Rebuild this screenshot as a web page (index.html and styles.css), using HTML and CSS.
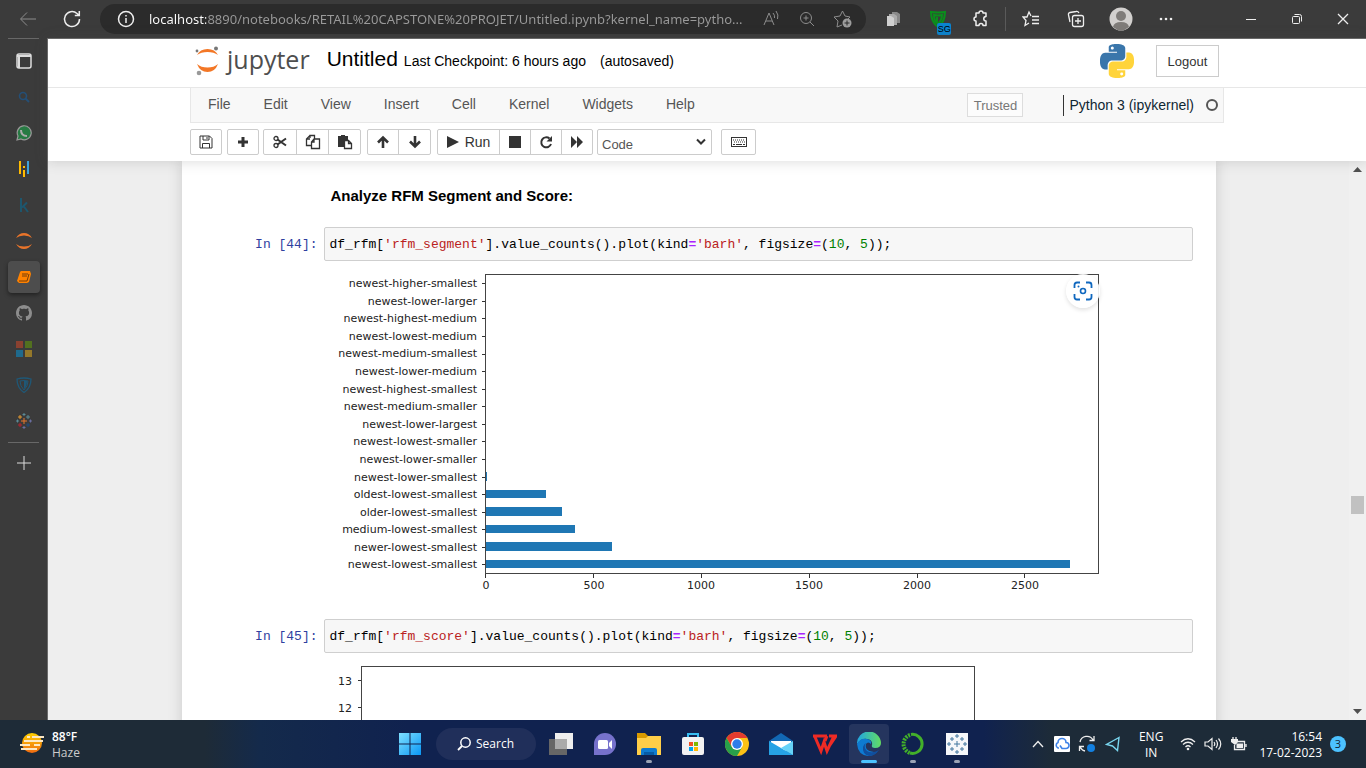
FILE: index.html
```html
<!DOCTYPE html>
<html lang="en">
<head>
<meta charset="utf-8">
<title>Untitled - Jupyter Notebook</title>
<link rel="stylesheet" href="styles.css">
</head>
<body>
<div class="browser-bar">
  <button class="nav-btn dim" aria-label="Back"><svg width="20" height="20" viewBox="0 0 20 20"><path d="M18 10H3M9 3.500L2.500 10L9 16.500"/></svg></button>
  <button class="nav-btn" aria-label="Refresh"><svg width="20" height="20" viewBox="0 0 20 20"><path d="M17.500 10A7.500 7.500 0 1 1 15 4.500L17.300 6.500M17.300 2V6.500H12.800" stroke-width="1.500"/></svg></button>
  <div class="address">
    <button class="bar-btn" aria-label="Site information"><svg width="18" height="18" viewBox="0 0 18 18"><circle cx="9" cy="9" r="7.500" stroke-width="1.500"/><path d="M9 8V13M9 5V6.500" stroke-width="1.500"/></svg></button>
    <input class="url" type="text" aria-label="Address" value="localhost:8890/notebooks/RETAIL%20CAPSTONE%20PROJET/Untitled.ipynb?kernel_name=pytho...">
    <button class="bar-btn dim" aria-label="Read aloud"><svg width="18" height="18" viewBox="0 0 18 18"><path d="M2 15L7 3L12 15M4 11H10M11 3Q13 5 12.500 8M14 1Q17 5 15.500 9"/></svg></button>
    <button class="bar-btn dim" aria-label="Zoom"><svg width="18" height="18" viewBox="0 0 18 18"><circle cx="8" cy="8" r="5.500"/><path d="M12 12L16 16M8 5.500V10.500M5.500 8H10.500"/></svg></button>
    <button class="bar-btn dim" aria-label="Add to favorites"><svg width="20" height="20" viewBox="0 0 20 20"><path d="M9 16L4 18L5 12L1 8L7 7L9.500 2L12 7L17 8L15 10"/><circle cx="14" cy="14" r="4.500" fill="#9d9d9d" stroke="none"/><path d="M14 11.500V16.500M11.500 14H16.500" stroke="#2b2b2b"/></svg></button>
  </div>
  <div class="extensions">
    <button class="bar-btn" aria-label="Copy extension"><svg width="18" height="18" viewBox="0 0 18 18" stroke="none"><path d="M7 2H12L15 4V13H7Z" fill="#888"/><path d="M4 4H9L12 6V15H4Z" fill="#aaa"/><path d="M2 6H6L9 8V16H2Z" fill="#d0d0d0"/></svg></button>
    <button class="bar-btn shield" aria-label="VPN extension"><svg width="18" height="18" viewBox="0 0 18 18"><path d="M2 2Q9 3 16 2Q16 12 9 17Q2 12 2 2ZM5 5Q9 6 13 5Q13 10 9 14Q5 11 5 5ZM8 7V12" stroke="#0a8f1c" stroke-width="2"/></svg><span class="badge">SG</span></button>
    <button class="bar-btn" aria-label="Extensions"><svg width="18" height="18" viewBox="0 0 18 18"><path d="M4 3H7A2 2 0 0 1 11 3H14V6.500A2 2 0 0 0 14 11V15.500H11A2 2 0 0 0 7 15.500H4V11A2 2 0 0 1 4 7Z" stroke-width="1.500" stroke-linejoin="round"/></svg></button>
  </div>
  <div class="tools">
    <button class="bar-btn" aria-label="Favorites"><svg width="18" height="18" viewBox="0 0 18 18"><path d="M9 6L7 2L5 7L1 7L4 10.500L3 15.500L7 13M10 6.500H17M10 10H17M10 13.500H17" stroke-width="1.300"/></svg></button>
    <button class="bar-btn" aria-label="Collections"><svg width="18" height="18" viewBox="0 0 18 18"><path d="M3 12L1.500 5Q1 3 3 2.500L9 1.500Q11 1 12 3" stroke-width="1.300"/><rect x="5.500" y="5.500" width="11" height="11" rx="2" stroke-width="1.300"/><path d="M11 8V14M8 11H14" stroke-width="1.300"/></svg></button>
    <button class="bar-btn" aria-label="Profile"><svg width="24" height="24" viewBox="0 0 24 24" stroke="none"><circle cx="12" cy="12" r="11.500" fill="#d2d0ce"/><circle cx="12" cy="9" r="5" fill="#7f7c79"/><path d="M4 20Q5 15 12 15Q19 15 20 20Q12 27 4 20Z" fill="#7f7c79"/></svg></button>
    <button class="bar-btn" aria-label="Menu"><svg width="16" height="16" viewBox="0 0 16 16" stroke="none" fill="#eee"><circle cx="3" cy="8" r="1.300"/><circle cx="8" cy="8" r="1.300"/><circle cx="13" cy="8" r="1.300"/></svg></button>
  </div>
  <div class="window-controls">
    <button class="bar-btn" aria-label="Minimize"><svg width="12" height="12" viewBox="0 0 12 12"><path d="M1 6.500H11"/></svg></button>
    <button class="bar-btn" aria-label="Restore"><svg width="12" height="12" viewBox="0 0 12 12"><rect x="1.500" y="3.500" width="7" height="7" rx="1"/><path d="M3.500 1.500H8.500Q10.500 1.500 10.500 3.500V8.500"/></svg></button>
    <button class="bar-btn" aria-label="Close"><svg width="12" height="12" viewBox="0 0 12 12"><path d="M1 1L11 11M11 1L1 11" stroke-width="1.300"/></svg></button>
  </div>
</div>

<div class="workspace">
  <nav class="side" aria-label="Vertical tabs">
    <button class="side-btn" aria-label="Tab actions"><svg width="16" height="16" viewBox="0 0 16 16"><rect x="1" y="1" width="14" height="14" rx="2" stroke="#ddd" stroke-width="1.500"/><path d="M1 3H15M3 3V15" stroke="#ddd" stroke-width="2"/></svg></button>
    <button class="side-btn" aria-label="Search tab"><svg width="12" height="12" viewBox="0 0 12 12"><circle cx="5" cy="5" r="3.500" stroke="#244f77" stroke-width="1.600"/><path d="M7.500 7.500L11 11" stroke="#244f77" stroke-width="1.800"/></svg></button>
    <button class="side-btn" aria-label="WhatsApp"><svg width="16" height="16" viewBox="0 0 16 16"><path d="M1 15L2 11A7 7 0 1 1 5 14Z" fill="#277a43" stroke="#999" stroke-width="1.200"/><path d="M5 5Q5 11 11 11" stroke="#aaa" stroke-width="2"/></svg></button>
    <button class="side-btn" aria-label="Pandas"><svg width="16" height="16" viewBox="0 0 16 16" stroke="none"><path d="M3 0H5V13H3ZM7 5H9V7H7ZM7 9H9V16H7Z" fill="#fb0"/><path d="M11 0H13V13H11Z" fill="#3ba2dc"/></svg></button>
    <button class="side-btn" aria-label="Kaggle"><svg width="16" height="16" viewBox="0 0 16 16"><path d="M5 1V15M11 5.500L6 10.500M7.500 9L12 15" stroke="#1d566d" stroke-width="2"/></svg></button>
    <button class="side-btn" aria-label="Jupyter home"><svg width="16" height="16" viewBox="0 0 16 16" stroke="none" fill="#e8742a"><path d="M0 5Q3 0 8 0T16 5Q13 2.500 8 2.500T0 5ZM0 11Q3 16 8 16T16 11Q13 13.500 8 13.500T0 11Z"/></svg></button>
    <button class="side-btn active" aria-label="Untitled notebook"><svg width="14" height="14" viewBox="0 0 14 14" stroke="none"><path d="M4 1H13L14 4L12 12L10 13H2L0 11L3 2Z" fill="#ff8200"/><path d="M5 4H11M5 6H10M2 11H10L12 4" fill="none" stroke="#733d0a"/></svg></button>
    <button class="side-btn" aria-label="GitHub"><svg width="16" height="16" viewBox="0 0 16 16" stroke="none" fill="#8d8d8d"><path d="M8 0C3.580 0 0 3.580 0 8c0 3.540 2.290 6.530 5.470 7.590.4.070.55-.17.55-.38 0-.19-.01-.82-.01-1.490-2.010.37-2.530-.49-2.690-.94-.09-.23-.48-.94-.82-1.130-.28-.15-.68-.52-.01-.53.63-.01 1.080.58 1.230.82.72 1.210 1.870.87 2.330.66.07-.52.28-.87.51-1.070-1.780-.2-3.640-.89-3.640-3.950 0-.87.31-1.590.82-2.150-.08-.2-.36-1.020.08-2.120 0 0 .67-.21 2.200.82.64-.18 1.320-.27 2-.27s1.360.09 2 .27c1.530-1.040 2.200-.82 2.200-.82.44 1.100.16 1.920.08 2.120.51.56.82 1.270.82 2.150 0 3.070-1.870 3.750-3.650 3.950.29.25.54.73.54 1.480 0 1.070-.01 1.930-.01 2.200 0 .21.15.46.55.38A8.010 8.010 0 0 0 16 8c0-4.420-3.580-8-8-8z"/></svg></button>
    <button class="side-btn" aria-label="Microsoft"><svg width="16" height="16" viewBox="0 0 16 16" stroke="none"><path d="M0 0H7V7H0Z" fill="#8a4130"/><path d="M9 0H16V7H9Z" fill="#52701f"/><path d="M0 9H7V16H0Z" fill="#1f6a8d"/><path d="M9 9H16V16H9Z" fill="#94782a"/></svg></button>
    <button class="side-btn" aria-label="VPN"><svg width="16" height="16" viewBox="0 0 16 16"><path d="M1 2Q8 0 15 2Q15 11 8 15.500Q1 11 1 2Z" stroke="#1f5877" stroke-width="1.300"/><path d="M4 4Q8 3 12 4Q12 9 8 13Q4 9 4 4Z" stroke="#1f5877"/><path d="M8 4V12Q11 9 11 4Z" fill="#1f5877" stroke="none"/></svg></button>
    <button class="side-btn" aria-label="Tableau"><svg width="16" height="16" viewBox="0 0 16 16"><path d="M8 5V11M5 8H11" stroke="#e8762c"/><path d="M4 2V6M2 4H6" stroke="#e59a30"/><path d="M12 2V6M10 4H14M8 0V3M6.500 1.500H9.500M1.500 6.500V9.500M0 8H3" stroke="#5b8a95"/><path d="M4 10V14M2 12H6" stroke="#b8232f"/><path d="M12 10V14M10 12H14" stroke="#1f4a7d"/><path d="M14.500 6.500V9.500M13 8H16M8 13V16M6.500 14.500H9.500" stroke="#6a6fa0"/></svg></button>
    <div class="side-rule"></div>
    <button class="side-btn plus" aria-label="Add tab"><svg width="16" height="16" viewBox="0 0 16 16"><path d="M8 1V15M1 8H15" stroke="#ddd"/></svg></button>
  </nav>

  <div class="page">
    <header class="nb-header">
      <div class="title-row">
        <div class="wide title-inner">
          <a class="logo" href="#"><svg width="26" height="30" viewBox="0 0 26 30" stroke="none"><path d="M2 9Q5 3 12.500 3T23 9Q19 6 12.500 6T2 9ZM2 18Q6 21.500 12.500 21.500T23 18Q20 26 12.500 26T2 18Z" fill="#f37726"/><circle cx="21" cy="2.500" r="2" fill="#777"/><circle cx="2" cy="5" r="1.400" fill="#777"/><circle cx="4" cy="27" r="2.300" fill="#999"/></svg><span>jupyter</span></a>
          <h1 class="nb-name">Untitled</h1>
          <span class="checkpoint">Last Checkpoint: 6 hours ago</span>
          <span class="autosave">(autosaved)</span>
          <svg class="python" width="34" height="34" viewBox="0 0 24 24" stroke="none"><path fill="#3a76ab" d="M14.250.18l.9.2.73.26.59.3.45.32.34.34.25.34.16.33.1.3.04.26.02.2-.01.13V8.500l-.05.63-.13.55-.21.46-.26.38-.3.31-.33.25-.35.19-.35.14-.33.1-.3.07-.26.04-.21.02H8.770l-.69.05-.59.14-.5.22-.41.27-.33.32-.27.35-.2.36-.15.37-.1.35-.07.32-.04.27-.02.21v3.060H3.170l-.21-.03-.28-.07-.32-.12-.35-.18-.36-.26-.36-.36-.35-.46-.32-.59-.28-.73-.21-.88-.14-1.050-.05-1.230.06-1.220.16-1.040.24-.87.32-.71.36-.57.4-.44.42-.33.42-.24.4-.16.36-.1.32-.05.24-.01h.16l.06.01h8.160v-.83H6.180l-.01-2.750-.02-.37.05-.34.11-.31.17-.28.25-.26.31-.23.38-.2.44-.18.51-.15.58-.12.64-.1.71-.06.77-.04.84-.02 1.270.05zm-6.300 1.980l-.23.33-.08.41.08.41.23.34.33.22.41.09.41-.09.33-.22.23-.34.08-.41-.08-.41-.23-.33-.33-.22-.41-.09-.41.09z"/><path fill="#ffd43b" d="M21.040 6.110l.28.06.32.12.35.18.36.27.36.35.35.47.32.59.28.73.21.88.14 1.040.05 1.230-.06 1.230-.16 1.040-.24.86-.32.71-.36.57-.4.45-.42.33-.42.24-.4.16-.36.09-.32.05-.24.02-.16-.01h-8.220v.82h5.840l.01 2.760.02.36-.05.34-.11.31-.17.29-.25.25-.31.24-.38.2-.44.17-.51.15-.58.13-.64.09-.71.07-.77.04-.84.01-1.270-.04-1.070-.14-.9-.2-.73-.25-.59-.3-.45-.33-.34-.34-.25-.34-.16-.33-.1-.3-.04-.25-.02-.2.01-.13v-5.340l.05-.64.13-.54.21-.46.26-.38.3-.32.33-.24.35-.2.35-.14.33-.1.3-.06.26-.04.21-.02.13-.01h5.840l.69-.05.59-.14.5-.21.41-.28.33-.32.27-.35.2-.36.15-.36.1-.35.07-.32.04-.28.02-.21V6.070h2.090l.14.01zm-6.470 14.250l-.23.33-.08.41.08.41.23.33.33.23.41.08.41-.08.33-.23.23-.33.08-.41-.08-.41-.23-.33-.33-.23-.41-.08-.41.08z"/></svg>
          <button class="logout">Logout</button>
        </div>
      </div>
      <div class="wide menubar">
        <nav class="menus">
          <a href="#">File</a><a href="#">Edit</a><a href="#">View</a><a href="#">Insert</a><a href="#">Cell</a><a href="#">Kernel</a><a href="#">Widgets</a><a href="#">Help</a>
        </nav>
        <button class="trusted">Trusted</button>
        <div class="kernel"><span>Python 3 (ipykernel)</span><i class="idle"></i></div>
      </div>
      <div class="wide toolbar">
        <div class="group"><button aria-label="Save"><svg width="14" height="14" viewBox="0 0 14 14"><path d="M1 1H10.500L13 3.500V13H1ZM4 1V5H10V1M3.500 13V8.500H10.500V13M8 2V4"/></svg></button></div>
        <div class="group"><button aria-label="Insert cell"><svg width="12" height="12" viewBox="0 0 12 12"><path d="M6 1V11M1 6H11" stroke-width="3"/></svg></button></div>
        <div class="group three">
          <button aria-label="Cut"><svg width="14" height="14" viewBox="0 0 14 14"><circle cx="3" cy="3.500" r="2" stroke-width="1.300"/><circle cx="3" cy="10.500" r="2" stroke-width="1.300"/><path d="M4.500 4.500L13 10.500M4.500 9.500L13 3.500" stroke-width="2"/></svg></button>
          <button aria-label="Copy"><svg width="16" height="16" viewBox="0 0 16 16"><path d="M5 4V1.500H9.500V5M5 1.500L1.500 5V11.500H6M1.500 5H5M9 5H14.500V14.500H6.500V8L9 5V8H6.500" stroke-width="1.300"/></svg></button>
          <button aria-label="Paste"><svg width="16" height="16" viewBox="0 0 16 16"><path d="M1 2H4V1H8V2H11V6H7V13H1Z" fill="#333" stroke="none"/><path d="M7.500 6.500H11.500L14.500 9.500V14.500H7.500ZM11.500 6.500V9.500H14.500" stroke-width="1.300"/></svg></button>
        </div>
        <div class="group">
          <button aria-label="Move up"><svg width="14" height="14" viewBox="0 0 14 14"><path d="M7 13V3M2 7.500L7 2.500L12 7.500" stroke-width="2.600"/></svg></button>
          <button aria-label="Move down"><svg width="14" height="14" viewBox="0 0 14 14"><path d="M7 1V11M2 6.500L7 11.500L12 6.500" stroke-width="2.600"/></svg></button>
        </div>
        <div class="group run">
          <button class="run-btn"><svg width="12" height="12" viewBox="0 0 12 12"><path d="M0 0L12 6L0 12Z" fill="#333" stroke="none"/></svg>Run</button>
          <button aria-label="Stop"><svg width="12" height="12" viewBox="0 0 12 12"><path d="M0 0H12V12H0Z" fill="#333" stroke="none"/></svg></button>
          <button aria-label="Restart"><svg width="14" height="14" viewBox="0 0 14 14"><path d="M12 9A5 5 0 1 1 10.500 3.500" stroke-width="2"/><path d="M13 1V6.500H7.500Z" fill="#333" stroke="none"/></svg></button>
          <button aria-label="Restart and run all"><svg width="14" height="12" viewBox="0 0 14 12"><path d="M1 0L7 6V0L13 6L7 12V6L1 12Z" fill="#333" stroke="none"/></svg></button>
        </div>
        <div class="select-wrap">
          <select aria-label="Cell type"><option>Code</option><option>Markdown</option></select>
          <svg width="10" height="8" viewBox="0 0 10 8"><path d="M1 1.500L5 5.500L9 1.500" stroke-width="2"/></svg>
        </div>
        <div class="group keys"><button aria-label="Command palette"><svg width="16" height="10" viewBox="0 0 16 10"><rect x=".5" y=".5" width="15" height="9"/><path d="M2 3H14M3 5H14" stroke-dasharray="1 1"/><path d="M2 7.500H4M5 7.500H11M12 7.500H14"/></svg></button></div>
      </div>
    </header>

    <div class="scroll-area">
      <div class="site">
        <main class="wide notebook">
          <h2 class="md">Analyze RFM Segment and Score:</h2>
          <div class="cell">
            <div class="prompt">In [44]:</div>
            <pre class="code">df_rfm[<span class="s">'rfm_segment'</span>].value_counts().plot(kind<span class="o">=</span><span class="s">'barh'</span>, figsize<span class="o">=</span>(<span class="n">10</span>, <span class="n">5</span>));</pre>
          </div>
          <div class="output">
            <svg class="chart" width="780" height="334" viewBox="0 0 780 334" role="img" aria-label="RFM segment counts">
              <g fill="#1f77b4">
                <rect x="161" y="205" width="2" height="9"/><rect x="161" y="223" width="61" height="8"/><rect x="161" y="240" width="77" height="9"/><rect x="161" y="258" width="90" height="8"/><rect x="161" y="275" width="127" height="9"/><rect x="161" y="293" width="585" height="8"/>
              </g>
              <g class="axes"><rect x="161" y="7" width="613" height="299"/>
                <path d="M158 16H161M158 34H161M158 51H161M158 69H161M158 87H161M158 104H161M158 122H161M158 139H161M158 157H161M158 174H161M158 192H161M158 210H161M158 227H161M158 245H161M158 262H161M158 280H161M158 297H161M161 307V311M269 307V311M377 307V311M485 307V311M593 307V311M700 307V311"/>
              </g>
              <g class="ylab">
                <text x="153" y="20">newest-higher-smallest</text><text x="153" y="38">newest-lower-larger</text><text x="153" y="55">newest-highest-medium</text><text x="153" y="73">newest-lowest-medium</text><text x="153" y="90">newest-medium-smallest</text><text x="153" y="108">newest-lower-medium</text><text x="153" y="126">newest-highest-smallest</text><text x="153" y="143">newest-medium-smaller</text><text x="153" y="161">newest-lower-largest</text><text x="153" y="178">newest-lowest-smaller</text><text x="153" y="196">newest-lower-smaller</text><text x="153" y="214">newest-lower-smallest</text><text x="153" y="231">oldest-lowest-smallest</text><text x="153" y="249">older-lowest-smallest</text><text x="153" y="266">medium-lowest-smallest</text><text x="153" y="284">newer-lowest-smallest</text><text x="153" y="301">newest-lowest-smallest</text>
              </g>
              <g class="xlab"><text x="162" y="322">0</text><text x="270" y="322">500</text><text x="377" y="322">1000</text><text x="485" y="322">1500</text><text x="593" y="322">2000</text><text x="701" y="322">2500</text></g>
            </svg>
            <button class="visual-search" aria-label="Visual search"><svg width="20" height="20" viewBox="0 0 20 20"><path d="M1.500 7V4Q1.500 1.500 4 1.500H7M13 1.500H16Q18.500 1.500 18.500 4V7M18.500 13V16Q18.500 18.500 16 18.500H13M7 18.500H4Q1.500 18.500 1.500 16V13" stroke="#1068bf" stroke-width="1.800"/><circle cx="10" cy="10" r="2.500" stroke="#1068bf" stroke-width="1.600"/><circle cx="5.500" cy="5.500" r="1" fill="#1068bf" stroke="none"/></svg></button>
          </div>
          <div class="cell">
            <div class="prompt">In [45]:</div>
            <pre class="code">df_rfm[<span class="s">'rfm_score'</span>].value_counts().plot(kind<span class="o">=</span><span class="s">'barh'</span>, figsize<span class="o">=</span>(<span class="n">10</span>, <span class="n">5</span>));</pre>
          </div>
          <div class="output">
            <svg class="chart" width="780" height="334" viewBox="0 0 780 334" role="img" aria-label="RFM score counts">
              <g class="axes"><rect x="37" y="7" width="613" height="299"/><path d="M34 21H37M34 48H37"/></g>
              <g class="ylab"><text x="28" y="26">13</text><text x="28" y="53">12</text></g>
            </svg>
          </div>
        </main>
      </div>
      <div class="scrollbar">
        <svg width="9" height="5" viewBox="0 0 9 5"><path d="M0 5L4.500 0L9 5Z" fill="#505050" stroke="none"/></svg>
        <div class="track"><div class="thumb"></div></div>
        <svg width="9" height="5" viewBox="0 0 9 5"><path d="M0 0H9L4.500 5Z" fill="#505050" stroke="none"/></svg>
      </div>
    </div>
  </div>
</div>

<footer class="taskbar">
  <button class="weather">
    <svg width="24" height="24" viewBox="0 0 24 24" stroke="none"><defs><linearGradient id="sun" x1="0" y1="0" x2="0" y2="1"><stop offset="0" stop-color="#ffd000"/><stop offset="1" stop-color="#ef6a12"/></linearGradient></defs><circle cx="12" cy="11" r="10" fill="url(#sun)"/><path d="M7 5H10M12 5H24M4 9H23M0 13H10M14 13H20M1 17H17" stroke="#fde7c3" stroke-width="1.800"/></svg>
    <span class="stack"><b>88°F</b><span>Haze</span></span>
  </button>
  <div class="dock">
    <button class="app" aria-label="Start"><svg width="24" height="24" viewBox="0 0 24 24" stroke="none"><defs><linearGradient id="win" x1="0" y1="0" x2="1" y2="1"><stop offset="0" stop-color="#7fe0ff"/><stop offset="1" stop-color="#0a97f5"/></linearGradient></defs><path d="M1 1H11.500V11.500H1ZM12.500 1H23V11.500H12.500ZM1 12.500H11.500V23H1ZM12.500 12.500H23V23H12.500Z" fill="url(#win)"/></svg></button>
    <button class="search"><svg width="14" height="14" viewBox="0 0 14 14"><circle cx="8.500" cy="5.500" r="4.700" stroke="#fff" stroke-width="1.500"/><path d="M5 9L1 13" stroke="#fff" stroke-width="1.800"/></svg>Search</button>
    <button class="app" aria-label="Task view"><svg width="24" height="24" viewBox="0 0 24 24" stroke="none"><path d="M6 1H24V17H6Z" fill="#eee"/><path d="M0 7H18V23H0Z" fill="#666"/><path d="M6 7H18V17H6Z" fill="#aaa"/></svg></button>
    <button class="app" aria-label="Chat"><svg width="24" height="24" viewBox="0 0 24 24" stroke="none"><path d="M1 23V12A11 11 0 1 1 12 23Z" fill="#7672cc"/><rect x="5" y="8" width="10" height="9" rx="1.500" fill="#fff"/><path d="M16 11L19 8V17L16 14Z" fill="#fff"/></svg></button>
    <button class="app open" aria-label="File Explorer"><svg width="24" height="24" viewBox="0 0 24 24" stroke="none"><path d="M0 1H8L11 4V9H0Z" fill="#d99a00"/><path d="M0 6H9L11 4H24V23H0Z" fill="#ffce48"/><path d="M4 23V18Q4 16 6 16H18Q20 16 20 18V23Z" fill="#0f7bd0"/><path d="M7 20H17V23H7Z" fill="#075ba5"/></svg></button>
    <button class="app" aria-label="Store"><svg width="24" height="24" viewBox="0 0 24 24" stroke="none"><path d="M7 6V2H17V6" fill="none" stroke="#37bdf2" stroke-width="2"/><rect x="1" y="5" width="22" height="18" rx="2" fill="#f2f2f2"/><path d="M8 10H12V14H8Z" fill="#f25022"/><path d="M13 10H17V14H13Z" fill="#7fba00"/><path d="M8 15H12V19H8Z" fill="#00a4ef"/><path d="M13 15H17V19H13Z" fill="#ffb900"/></svg></button>
    <button class="app" aria-label="Chrome"><svg width="24" height="24" viewBox="0 0 24 24" stroke="none"><circle cx="12" cy="12" r="12" fill="#fbc116"/><path d="M1.600 6A12 12 0 0 1 22.400 6H12L6.800 15Z" fill="#e33b2e"/><path d="M1.600 6A12 12 0 0 0 12 24L17.200 15L12 17.500L6.800 15Z" fill="#28a04a"/><circle cx="12" cy="12" r="6" fill="#fff"/><circle cx="12" cy="12" r="4.700" fill="#2f7de9"/></svg></button>
    <button class="app" aria-label="Mail"><svg width="24" height="24" viewBox="0 0 24 24" stroke="none"><path d="M0 9L12 1L24 9V23H0Z" fill="#1268b4"/><path d="M2 9H22V17L12 20L2 17Z" fill="#fff"/><path d="M0 9L24 23H0Z" fill="#26a2e5"/><path d="M24 9L12 16L24 23Z" fill="#66d3f8"/></svg></button>
    <button class="app" aria-label="WPS Office"><svg width="24" height="24" viewBox="0 0 24 24"><path d="M2 5L8 19L11 10L14 19L21 4M0 4H14M14 4L12 9M16 4H23L17 13" stroke="#ee2b25" stroke-width="3"/></svg></button>
    <button class="app current" aria-label="Edge"><svg width="24" height="24" viewBox="0 0 24 24" stroke="none"><defs><linearGradient id="ed" x1="0" y1="0" x2="1" y2="0"><stop offset="0" stop-color="#20a5e3"/><stop offset="1" stop-color="#62dc62"/></linearGradient></defs><path d="M0 12A12 12 0 0 1 24 11Q24 16 18 16Q14 16 15 13Q16 8 10 7Q4 6 0 12Z" fill="url(#ed)"/><path d="M0 12Q3 6 10 7Q15 8 14 12Q11 9 9 12Q7 20 20 20Q16 24 11 24Q1 23 0 12Z" fill="#0e7bd2"/><path d="M9 11Q6 15 10 19Q15 22 22 18Q18 24 12 24Q5 22 6 15Q7 12 9 11Z" fill="#104f9e"/></svg></button>
    <button class="app open" aria-label="Anaconda"><svg width="24" height="24" viewBox="0 0 24 24"><path d="M10 2.500A9.500 9.500 0 1 1 9 21" stroke="#43b02a" stroke-width="3"/><path d="M9 3A9.500 9.500 0 0 0 9 21" stroke="#43b02a" stroke-width="4" stroke-dasharray="2 1"/></svg></button>
    <button class="app open" aria-label="Tableau"><svg width="24" height="24" viewBox="0 0 24 24"><path d="M1 1H23V23H1Z" fill="#f5f7fa" stroke="none"/><path d="M12 9V15M9 12H15M7 5V9M5 7H9M17 5V9M15 7H19M7 15V19M5 17H9M17 15V19M15 17H19M12 2V6M10 4H14M12 18V22M10 20H14M4 10V14M2 12H6M20 10V14M18 12H22" stroke="#42779f"/></svg></button>
  </div>
  <div class="tray">
    <svg class="chevron" width="12" height="8" viewBox="0 0 12 8"><path d="M1 7L6 1.500L11 7" stroke="#eee" stroke-width="1.300"/></svg>
    <svg width="16" height="16" viewBox="0 0 16 16"><rect width="16" height="16" rx="1" fill="#fff" stroke="none"/><path d="M5 12H4A3 3 0 0 1 4 6.500A4 4 0 0 1 12 6.500A3 3 0 0 1 12 12.500H8L6 9.500" stroke="#3d82e8" stroke-width="1.600"/></svg>
    <svg width="18" height="18" viewBox="0 0 18 18"><path d="M2 7A7 7 0 0 1 15 5M16 1V5.500H11.500M7 16A7 7 0 0 1 2 11M1.500 16V11.500H6" stroke="#eee" stroke-width="1.300"/><circle cx="13" cy="13" r="4" fill="#1380e0" stroke="none"/></svg>
    <svg class="locate" width="16" height="16" viewBox="0 0 16 16"><path d="M14 1.500L1.500 8.500L7.500 10L12.500 14.500Z" stroke="#79d6ef" stroke-width="1.400"/></svg>
    <button class="lang"><span>ENG</span><span>IN</span></button>
    <svg width="16" height="14" viewBox="0 0 16 14"><path d="M1 5Q8 -1.500 15 5M3 7.500Q8 3 13 7.500M5.500 10Q8 7.500 10.500 10" stroke="#eee" stroke-width="1.300"/><circle cx="8" cy="12" r="1.300" fill="#eee" stroke="none"/></svg>
    <svg width="18" height="14" viewBox="0 0 18 14"><path d="M1 5H4L8 1.500V12.500L4 9H1ZM10 5Q11.500 7 10 9M12 3Q15 7 12 11M14.500 1.500Q19 7 14.500 12.500" stroke="#eee" stroke-width="1.200"/></svg>
    <svg width="18" height="16" viewBox="0 0 18 16"><path d="M5 5.500H14.500V13.500H4.500V9M16 8V11M3 1V3M6 1V3" stroke="#eee" stroke-width="1.300"/><path d="M6.500 7.500H13V12H6.500ZM1 3H8V6L5 9L1 6Z" fill="#eee" stroke="none"/></svg>
    <button class="clock"><span>16:54</span><span>17-02-2023</span></button>
    <span class="count">3</span>
  </div>
</footer>
</body>
</html>
```
FILE: styles.css
```css
* { box-sizing: border-box; }
body {
  margin: 0;
  height: 100vh;
  display: flex;
  flex-direction: column;
  overflow: hidden;
  font-family: "Liberation Sans", Arial, sans-serif;
  font-size: 14px;
  color: #000;
}
button { border: 0; padding: 0; margin: 0; background: none; font: inherit; color: inherit; }
svg { flex: none; display: block; }
svg:not([fill]) { fill: none; }
svg:not([stroke]) { stroke: currentColor; }
a { color: inherit; text-decoration: none; }

/* Browser chrome */
.browser-bar {
  flex: none;
  height: 38px;
  display: flex;
  align-items: center;
  background: #3b3b3b;
  color: #eee;
}
.nav-btn, .bar-btn { display: flex; align-items: center; justify-content: center; }
.nav-btn { width: 44px; }
.nav-btn:first-child { margin-left: 6px; }
.dim { color: #8d8d8d; }
.address {
  flex: 1;
  height: 30px;
  margin-left: 6px;
  padding: 0 5px 0 8px;
  display: flex;
  align-items: center;
  border-radius: 15px;
  background: #2b2b2b;
}
.address .bar-btn { width: 36px; flex: none; }
.url {
  flex: 1;
  min-width: 0;
  height: 24px;
  margin-left: 5px;
  padding: 0;
  border: 0;
  outline: 0;
  font: 13px "Noto Sans", sans-serif;
  color: transparent;
  background: linear-gradient(to right, #fff 57px, #9a9a9a 57px);
  -webkit-background-clip: text;
  background-clip: text;
}
.extensions { display: flex; margin-left: 6px; padding-right: 2px; border-right: 1px solid #5a5a5a; }
.extensions .bar-btn, .tools .bar-btn { width: 44px; height: 24px; }
.extensions { width: 134px; }
.shield { position: relative; }
.badge {
  position: absolute;
  right: 8px;
  bottom: -4px;
  width: 14px;
  height: 12px;
  border-radius: 2px;
  background: #0b84cf;
  color: #000;
  font-size: 9px;
  line-height: 12px;
}
.tools { display: flex; width: 184px; padding-left: 2px; }
.tools .bar-btn { width: 45px; }
.window-controls { display: flex; margin-left: 38px; }
.window-controls .bar-btn { width: 46px; height: 24px; }

/* Vertical tab strip */
.workspace { flex: 1; min-height: 0; display: flex; }
.side {
  flex: none;
  width: 48px;
  padding-top: 6px;
  display: flex;
  flex-direction: column;
  align-items: center;
  background: #3b3b3b;
  border-right: 1px solid #6b6b6b;
}
.side::before { content: ""; width: 31px; height: 1px; margin-top: -6px; margin-bottom: 4px; background: #686868; }
.side-btn {
  width: 32px;
  height: 32px;
  margin: 2px 0;
  flex: none;
  display: flex;
  align-items: center;
  justify-content: center;
  border-radius: 4px;
}
.side-btn.active { background: #4d4d4d; box-shadow: 0 2px 4px #222; }
.side-rule { width: 31px; height: 1px; margin: 3px 0 2px; flex: none; background: #686868; }

/* Notebook header */
.page { flex: 1; min-width: 0; display: flex; flex-direction: column; border-top: 1px solid #6b6b6b; }
.wide { width: 100%; max-width: 1034px; margin: 0 auto; }
.nb-header {
  flex: none;
  height: 122px;
  background: #fff;
  position: relative;
  box-shadow: 0 0 12px 1px rgba(87, 87, 87, .2);
}
.title-row { border-bottom: 1px solid #e7e7e7; }
.title-inner { height: 48px; padding: 0 5px; display: flex; align-items: center; }
.logo { display: flex; gap: 6px; color: #4e4e4e; font: 25px/32px "Open Sans", sans-serif; align-items: center; padding-bottom: 4px; }
.logo span { padding-bottom: 5px; }
.nb-name { margin: 0 6px 8px 17px; font-size: 21px; line-height: 24px; font-weight: 400; }
.checkpoint { margin-bottom: 4px; }
.autosave { margin: 0 auto 4px 14px; }
.logout { width: 63px; height: 32px; margin-left: 22px; margin-bottom: 4px; border: 1px solid #ccc; font-size: 13px; color: #333; }
.python { margin-bottom: 4px; }
.menubar {
  height: 35px;
  display: flex;
  align-items: center;
  background: #f8f8f8;
  border: 1px solid #e7e7e7;
  border-top: 0;
  padding-right: 4px;
}
.menus { display: flex; gap: 33px; margin: 0 auto 3px 17px; color: #555; }
.trusted { width: 56px; height: 24px; border: 1px solid #ddd; background: #fcfcfc; color: #777; font-size: 13px; }
.kernel {
  display: flex;
  align-items: center;
  gap: 12px;
  height: 21px;
  margin-left: 40px;
  padding-left: 5px;
  border-left: 1px solid #333;
  color: #0f2733;
}
.idle { width: 12px; height: 12px; margin-right: 1px; border: 2px solid #555; border-radius: 50%; }
.toolbar { display: flex; padding-top: 6px; color: #333; }
.group { display: flex; height: 26px; margin-right: 5px; border: 1px solid #ccc; border-radius: 2px; }
.group button { width: 30px; display: flex; align-items: center; justify-content: center; }
.group button + button { border-left: 1px solid #ccc; width: 32px; }
.group:nth-child(2) { margin-right: 4px; }
.three button:first-child { width: 32px; }
.group.three, .group:nth-child(4) { margin-right: 6px; }
.run .run-btn { width: 61px; gap: 6px; }
.group.run { margin-right: 4px; }
.run button + button { width: 31px; }
.select-wrap { position: relative; margin-right: 9px; }
.select-wrap select {
  width: 115px;
  height: 26px;
  padding: 4px 4px 0;
  appearance: none;
  border: 1px solid #ccc;
  border-radius: 2px;
  background: #fff;
  color: #555;
  font: 13px "Liberation Sans", sans-serif;
}
.select-wrap svg { position: absolute; right: 6px; top: 9px; pointer-events: none; }
.keys button { width: 33px; }

/* Notebook */
.scroll-area { flex: 1; min-height: 0; display: flex; }
.site { flex: 1; min-width: 0; overflow: hidden; background: #eee; }
.notebook {
  min-height: 100%;
  padding: 25px 23px 0 15px;
  background: #fff;
  box-shadow: 0 0 12px 1px rgba(87, 87, 87, .2);
}
.md { margin: 0 0 21px 134px; font-size: 15px; line-height: 20px; font-weight: 700; }
.cell { display: flex; align-items: center; }
.prompt { width: 127px; padding: 2px 6px 0 0; flex: none; text-align: right; color: #303f9f; }
.prompt, .code { font-family: "Liberation Mono", monospace; font-size: 13px; line-height: 20px; }
.code { flex: 1; margin: 0; padding: 7px 5px 5px; border: 1px solid #cfcfcf; border-radius: 2px; background: #f7f7f7; }
.s { color: #ba2121; }
.n { color: #008000; }
.o { color: #a2f; font-weight: 700; }
.output { position: relative; margin: 6px 0 18px 127px; }
.chart text { font: 11px "DejaVu Sans", sans-serif; fill: #222; stroke: none; }
.chart rect { stroke: none; }
.axes { stroke: #333; shape-rendering: crispEdges; }
.chart .axes rect { stroke: #444; }
.ylab { text-anchor: end; }
.xlab { text-anchor: middle; }
.visual-search {
  position: absolute;
  left: 742px;
  top: 7px;
  width: 34px;
  height: 34px;
  display: flex;
  align-items: center;
  justify-content: center;
  border-radius: 50%;
  background: rgba(255, 255, 255, .9);
  box-shadow: 0 2px 4px rgba(0, 0, 0, .12);
}
.scrollbar {
  flex: none;
  width: 17px;
  padding: 6px 0;
  display: flex;
  flex-direction: column;
  align-items: center;
  background: #f0f0f0;
}
.track { flex: 1; display: flex; flex-direction: column; }
.track::before { content: ""; flex: 324; }
.track::after { content: ""; flex: 195; }
.thumb { width: 13px; height: 18px; background: #c1c1c1; }

/* Taskbar */
.taskbar {
  flex: none;
  height: 48px;
  display: grid;
  grid-template-columns: 1fr auto 1fr;
  align-items: center;
  color: #fff;
  font: 12px/16px "Open Sans", sans-serif;
  background: linear-gradient(to right, #1e2b37 0 15%, #142a4b 19%, #10224f 30% 72%, #1d2b38 77%);
}
.weather { display: flex; gap: 8px; margin-left: 20px; align-items: center; text-align: left; }
.stack { display: flex; flex-direction: column; color: #ccc; padding-top: 2px; }
.stack b { font-weight: 600; color: #fff; }
.dock { display: flex; align-items: center; }
.app {
  position: relative;
  width: 40px;
  height: 40px;
  margin: 0 2px;
  display: flex;
  align-items: center;
  justify-content: center;
  border-radius: 4px;
}
.open::after, .current::after {
  content: "";
  position: absolute;
  left: 17px;
  bottom: 1px;
  width: 6px;
  height: 3px;
  border-radius: 2px;
  background: #9aa3b5;
}
.current { background: rgba(255, 255, 255, .09); }
.current::after { left: 12px; width: 16px; background: #4cc2ff; }
.search {
  width: 100px;
  height: 32px;
  margin: 0 3px 0 4px;
  display: flex;
  align-items: center;
  justify-content: center;
  gap: 5px;
  border-radius: 16px;
  background: #202f5a;
}
.tray { display: flex; align-items: center; justify-content: flex-end; gap: 8px; padding-right: 20px; }
.chevron { margin-right: 2px; }
.locate { margin-left: 1px; }
.lang { display: flex; flex-direction: column; margin: 0 9px 0 10px; padding-top: 2px; }
.clock { display: flex; flex-direction: column; align-items: flex-end; margin-left: 3px; padding-top: 2px; }
.count { width: 16px; height: 16px; border-radius: 50%; background: #4cc2ff; color: #123; font-size: 11px; text-align: center; }
```
